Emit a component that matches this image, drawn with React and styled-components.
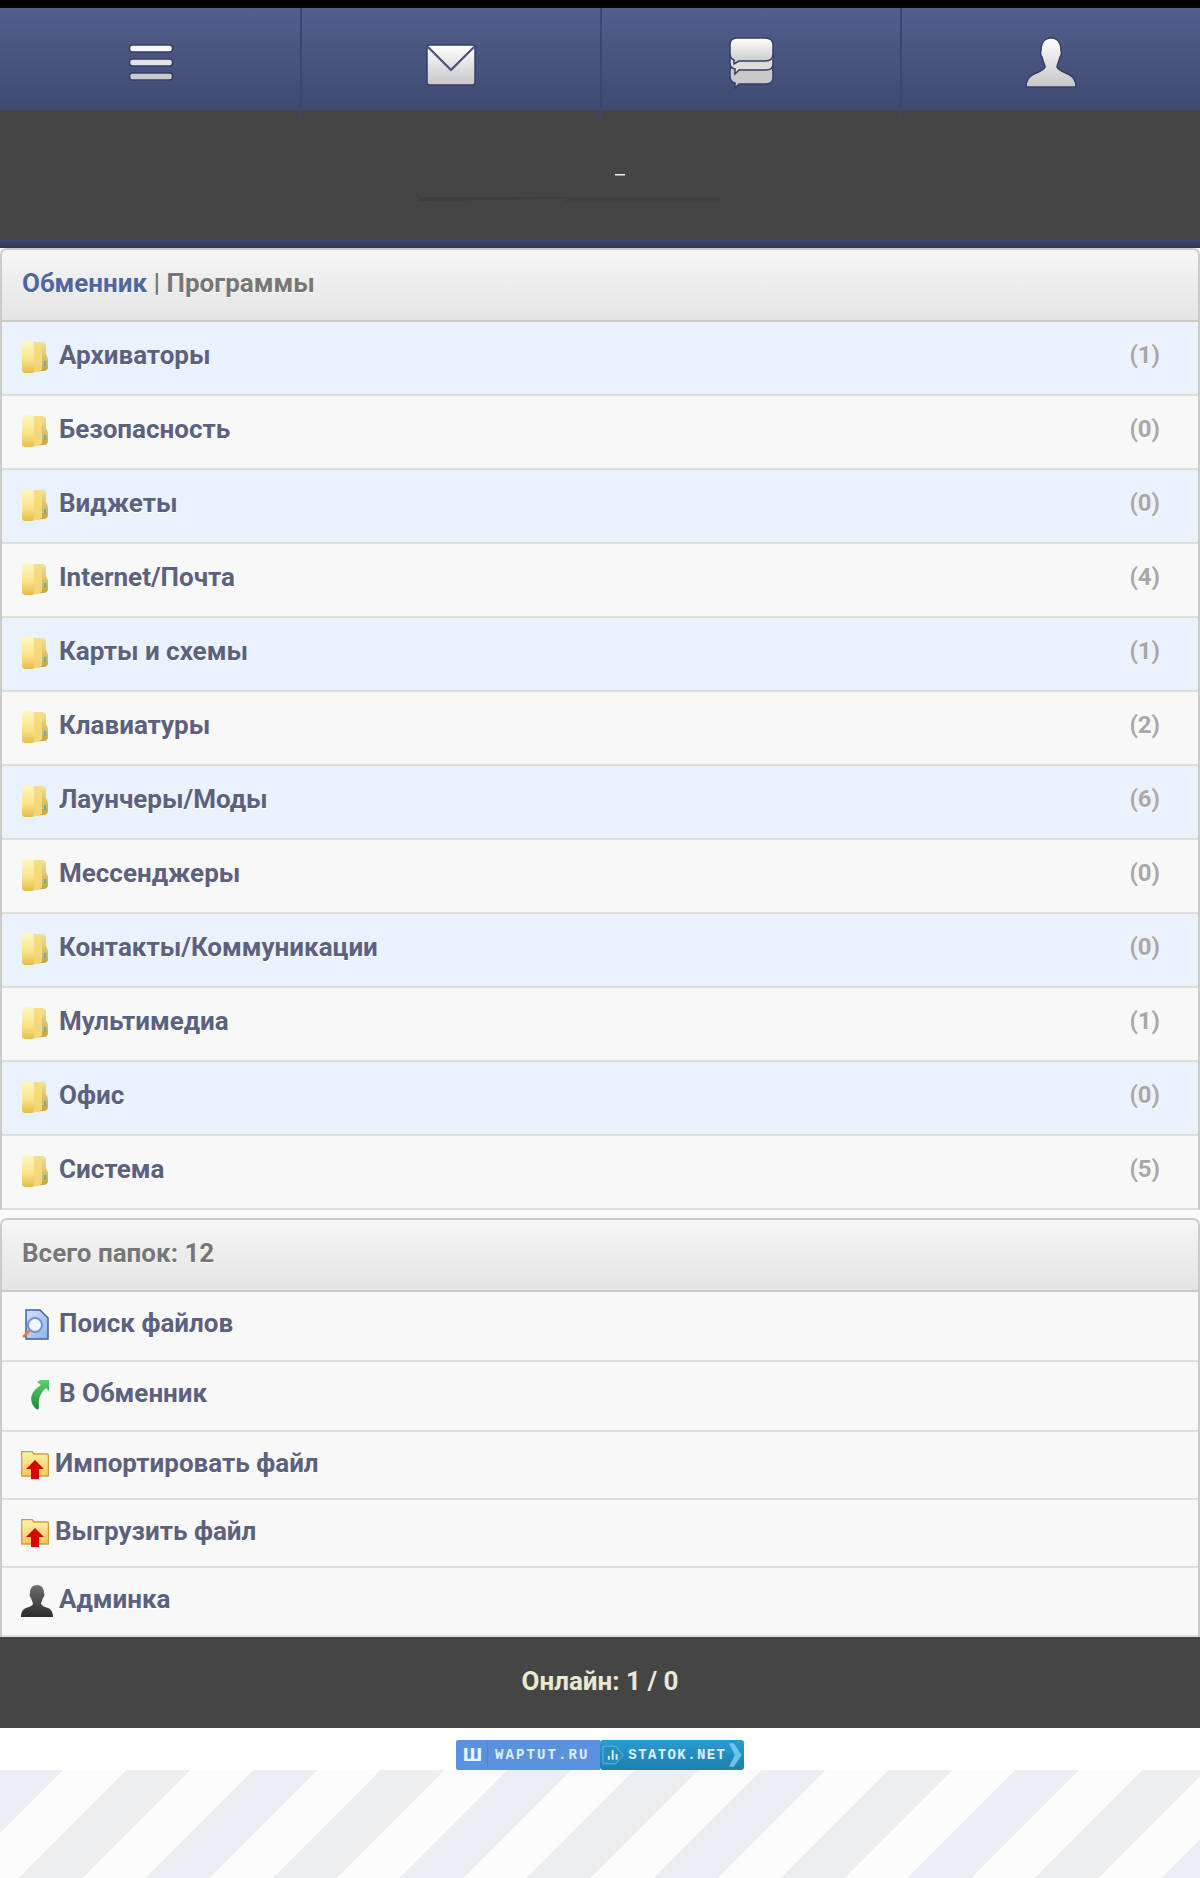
import React from 'react';
import styled, { createGlobalStyle } from 'styled-components';

const FONT = 'Roboto, "Noto Sans", sans-serif';
const BORDER = '#cbcbcb';
const ROW_LINE = '#dedede';
const STRIPE_BLUE = '#ebeef3';
const STRIPE_GREY = '#edeeef';
const STRIPE_WHITE = '#fcfcfc';

const FOLDERS = [
  { name: 'Архиваторы', count: 1 },
  { name: 'Безопасность', count: 0 },
  { name: 'Виджеты', count: 0 },
  { name: 'Internet/Почта', count: 4 },
  { name: 'Карты и схемы', count: 1 },
  { name: 'Клавиатуры', count: 2 },
  { name: 'Лаунчеры/Моды', count: 6 },
  { name: 'Мессенджеры', count: 0 },
  { name: 'Контакты/Коммуникации', count: 0 },
  { name: 'Мультимедиа', count: 1 },
  { name: 'Офис', count: 0 },
  { name: 'Система', count: 5 },
];

const IconDefs = () => (
  <svg width="0" height="0" style={{ position: 'absolute' }}>
    <defs>
      <linearGradient id="navGlyph" x1="0" y1="0" x2="0" y2="1">
        <stop offset="0" stopColor="#ffffff" />
        <stop offset="1" stopColor="#c6c6c6" />
      </linearGradient>
      <linearGradient id="folderFront" x1="0" y1="0" x2="0" y2="1">
        <stop offset="0" stopColor="#fff8c4" />
        <stop offset="0.6" stopColor="#fbe286" />
        <stop offset="1" stopColor="#e6bb4a" />
      </linearGradient>
      <linearGradient id="folderBack" x1="0" y1="0" x2="0" y2="1">
        <stop offset="0" stopColor="#f1e29c" />
        <stop offset="1" stopColor="#c9a23a" />
      </linearGradient>
      <linearGradient id="adminGlyph" x1="0" y1="0" x2="0" y2="1">
        <stop offset="0" stopColor="#6e6e6e" />
        <stop offset="1" stopColor="#2c2c2c" />
      </linearGradient>
      <linearGradient id="arrowGreen" x1="0" y1="0" x2="0" y2="1">
        <stop offset="0" stopColor="#5fd06a" />
        <stop offset="1" stopColor="#17893a" />
      </linearGradient>
      <linearGradient id="pageBlue" x1="0" y1="0" x2="1" y2="1">
        <stop offset="0" stopColor="#d3e3fa" />
        <stop offset="1" stopColor="#8fb2e6" />
      </linearGradient>
      <linearGradient id="folderUp" x1="0" y1="0" x2="0" y2="1">
        <stop offset="0" stopColor="#fff2a8" />
        <stop offset="1" stopColor="#f5c95a" />
      </linearGradient>
    </defs>
  </svg>
);

const MenuGlyph = () => (
  <svg width="47" height="38" viewBox="0 0 47 38">
    <g stroke="#333f68" strokeWidth="1.5">
      <rect x="1.5" y="1" width="43" height="7" rx="3" fill="#fafafa" />
      <rect x="1.5" y="15" width="43" height="7" rx="3" fill="#e2e2e2" />
      <rect x="1.5" y="29" width="43" height="7" rx="3" fill="#cacaca" />
    </g>
  </svg>
);

const MailGlyph = () => (
  <svg width="50" height="46" viewBox="0 -4 50 46">
    <rect x="1" y="1" width="48" height="40" rx="2.5" fill="url(#navGlyph)" stroke="#333f68" strokeWidth="1.5" />
    <path d="M2 3 L25 26 L48 3" fill="none" stroke="#46517a" strokeWidth="2.2" strokeLinejoin="round" />
  </svg>
);

const ChatGlyph = () => (
  <svg width="46" height="52" viewBox="0 0 46 52">
    <g stroke="#333f68" strokeWidth="1.5">
      <path d="M8 28 H38 Q45 28 45 34 V40 Q45 47 38 47 H11 L7 51 V46 Q2 45 2 39 V34 Q2 28 8 28 Z" fill="#c9c9c9" />
      <path d="M8 15 H38 Q45 15 45 21 V27 Q45 33 38 33 H11 L7 37 V32 Q2 31 2 26 V21 Q2 15 8 15 Z" fill="#dddddd" />
      <path d="M9 1 H37 Q45 1 45 8 V17 Q45 24 37 24 H11 L6 27 V23 Q2 22 2 16 V8 Q2 1 9 1 Z" fill="url(#navGlyph)" />
    </g>
  </svg>
);

const PersonGlyph = () => (
  <svg width="52" height="52" viewBox="0 0 52 52">
    <path
      d="M26 1 C33 1 36 7 36 14 C37 16 36 19 35 20 C34 25 32 28 32 30 C33 33 38 35 43 37 C48 39 51 44 51 50 H1 C1 44 4 39 9 37 C14 35 19 33 20 30 C20 28 18 25 17 20 C16 19 15 16 16 14 C16 7 19 1 26 1 Z"
      fill="url(#navGlyph)"
      stroke="#333f68"
      strokeWidth="1.5"
    />
  </svg>
);

const LogoRemnant = () => (
  <svg width="400" height="130" viewBox="0 0 400 130">
    <rect x="215" y="64" width="10" height="1.5" fill="#eeeeee" />
    <path d="M13 81 L20 87 L165 87 L165 89 L20 91 Z" fill="#3f3f3f" />
    <rect x="165" y="87" width="155" height="5" fill="#414141" />
  </svg>
);

const FolderIcon = () => (
  <svg width="28" height="34" viewBox="0 0 28 34">
    <path d="M8 2 H21 Q25 2 25 6 V14 Q27 17 27 20 V27 Q27 31 22 31 L9 32 Z" fill="url(#folderBack)" />
    <path d="M1 5 Q1 1 5 1 H10 Q13 1 13 5 V31 Q13 33 10 33 H5 Q1 33 1 30 Z" fill="url(#folderFront)" />
    <path d="M13 5 L21 2 V30 L13 33 Z" fill="#f8dd7e" opacity="0.85" />
    <rect x="23" y="21" width="2" height="5" fill="#4fb6c8" />
  </svg>
);

const SearchFileIcon = () => (
  <svg width="28" height="32" viewBox="0 0 28 32">
    <path d="M5 1 H19 L27 9 V30 H5 Z" fill="url(#pageBlue)" stroke="#3f5da8" strokeWidth="1.5" />
    <circle cx="14" cy="16" r="7" fill="#eef6ff" stroke="#6f93d6" strokeWidth="2" />
    <path d="M9 21 L2 28" stroke="#d9813a" strokeWidth="2.5" />
  </svg>
);

const BackArrowIcon = () => (
  <svg width="28" height="32" viewBox="0 0 28 32">
    <path d="M19 1 H28 V12 L25 9 C20 13 17 19 18 28 C18 31 16 31 14 29 C7 21 10 12 20 6 L16 3 Z" fill="url(#arrowGreen)" />
  </svg>
);

const UploadFolderIcon = () => (
  <svg width="28" height="28" viewBox="0 0 28 28">
    <path d="M0.5 25 V1.5 Q0.5 0.5 2 0.5 H11 L13 3 H26 Q27.5 3 27.5 5 V25 Z" fill="url(#folderUp)" stroke="#d59a3c" strokeWidth="1.5" />
    <path d="M14 9 L23 18 H18 V28 H10 V18 H5 Z" fill="#d90000" />
  </svg>
);

const AdminIcon = () => (
  <svg width="32" height="32" viewBox="0 0 32 32">
    <path
      d="M16 0 C21 0 23 4 23 8 C24 10 23 12 22 13 C21 16 20 18 20 19 C21 21 24 22 27 23 C30 24 32 27 32 32 H0 C0 27 2 24 5 23 C8 22 11 21 12 19 C12 18 11 16 10 13 C9 12 8 10 9 8 C9 4 11 0 16 0 Z"
      fill="url(#adminGlyph)"
    />
  </svg>
);

const TOOLS = [
  { name: 'Поиск файлов', Icon: SearchFileIcon, height: 68, gap: 10, lift: 1 },
  { name: 'В Обменник', Icon: BackArrowIcon, height: 68, gap: 10, lift: 1 },
  { name: 'Импортировать файл', Icon: UploadFolderIcon, height: 66, gap: 6, lift: 0 },
  { name: 'Выгрузить файл', Icon: UploadFolderIcon, height: 66, gap: 6, lift: 0 },
  { name: 'Админка', Icon: AdminIcon, height: 67, gap: 6, lift: 1 },
];

function App() {
  return (
    <>
      <GlobalStyle />
      <IconDefs />
      <Page>
        <TopEdge />
        <Nav>
          <NavCell><MenuGlyph /></NavCell>
          <NavCell><MailGlyph /></NavCell>
          <NavCell><ChatGlyph /></NavCell>
          <NavCell $last><PersonGlyph /></NavCell>
        </Nav>
        <LogoBand><LogoRemnant /></LogoBand>
        <BlueStrip />
        <Panel>
          <PanelHead>
            <HeadLink>Обменник</HeadLink> | Программы
          </PanelHead>
          {FOLDERS.map((folder, i) => (
            <FolderRow key={folder.name} $tinted={i % 2 === 0}>
              <FolderIcon />
              <RowLabel>{folder.name}</RowLabel>
              <Count>({folder.count})</Count>
            </FolderRow>
          ))}
        </Panel>
        <Panel $spaced>
          <PanelHead>Всего папок: 12</PanelHead>
          {TOOLS.map(({ name, Icon, height, gap, lift }) => (
            <ToolRow key={name} $height={height} $gap={gap} $lift={lift}>
              <Icon />
              <RowLabel>{name}</RowLabel>
            </ToolRow>
          ))}
        </Panel>
        <Footer>Онлайн: 1 / 0</Footer>
        <Counters>
          <WaptutBadge>
            <BadgeMark>ш</BadgeMark>
            <BadgeText $spacing={2.1}>WAPTUT.RU</BadgeText>
          </WaptutBadge>
          <StatokBadge>
            <svg width="24" height="22" viewBox="0 0 24 22">
              <path d="M1 2 H14 L22 11 L14 20 H1 Z" fill="#2a8cbc" stroke="#5cb8e0" />
              <path d="M7 16 V12 M11 16 V6 M15 16 V10" stroke="#d6eefa" strokeWidth="2" />
            </svg>
            <BadgeText $spacing={1.4}>STATOK.NET</BadgeText>
            <svg width="14" height="26" viewBox="0 0 14 26">
              <path d="M0 1 H5 L13 13 L5 25 H0 L6 13 Z" fill="#6fc3e8" />
            </svg>
          </StatokBadge>
        </Counters>
        <Stripes />
      </Page>
    </>
  );
}

const GlobalStyle = createGlobalStyle`
  html, body {
    margin: 0;
    padding: 0;
    background: #ffffff;
  }
  * {
    box-sizing: border-box;
  }
`;

const Page = styled.div`
  display: flex;
  flex-direction: column;
  min-height: 100vh;
  font-family: ${FONT};
  background: #fafafa;
`;

const TopEdge = styled.div`
  height: 8px;
  background: #000000;
`;

const Nav = styled.div`
  display: grid;
  grid-template-columns: repeat(4, 1fr);
  height: 102px;
  background: linear-gradient(to bottom, #525f8a, #3e4a72);
`;

const NavCell = styled.div`
  position: relative;
  display: flex;
  align-items: center;
  justify-content: center;
  padding: 8px 0 0 2px;

  &::after {
    content: '';
    display: ${props => (props.$last ? 'none' : 'block')};
    position: absolute;
    top: 0;
    right: -2px;
    width: 2px;
    height: 110px;
    background: #3b476e;
    z-index: 1;
  }
`;

const LogoBand = styled.div`
  height: 130px;
  background: #454545;
  display: flex;
  justify-content: center;
`;

const BlueStrip = styled.div`
  height: 8px;
  background: linear-gradient(to bottom, #3f4870, #2f3552);
`;

const Panel = styled.div`
  display: flex;
  flex-direction: column;
  margin-top: ${props => (props.$spaced ? '8px' : '0')};
  border: 2px solid ${BORDER};
  border-bottom: 0;
  border-radius: 7px 7px 0 0;
  background: #f8f8f8;
  overflow: hidden;
`;

const PanelHead = styled.div`
  height: 72px;
  display: flex;
  align-items: center;
  padding: 0 20px 4px;
  background: linear-gradient(to bottom, #f6f6f6, #e4e4e4);
  border-bottom: 2px solid ${BORDER};
  font-size: 26px;
  font-weight: 700;
  color: #777777;
  text-shadow: 0 1px 0 #ffffff;
  white-space: pre;
`;

const HeadLink = styled.span`
  color: #4f66a2;
`;

const FolderRow = styled.div`
  height: 74px;
  display: flex;
  align-items: center;
  gap: 10px;
  padding: 0 38px 2px 19px;
  background: ${props => (props.$tinted ? '#eaf2fe' : '#f8f8f8')};
  border-bottom: 2px solid ${ROW_LINE};
`;

const ToolRow = styled.div`
  height: ${props => props.$height + 2}px;
  display: flex;
  align-items: center;
  gap: ${props => props.$gap}px;
  padding: 0 20px ${props => props.$lift * 2}px 19px;
  background: #f8f8f8;
  border-bottom: 2px solid ${ROW_LINE};
`;

const RowLabel = styled.span`
  flex: 1;
  padding-bottom: 4px;
  font-size: 26px;
  font-weight: 700;
  color: #5b617e;
  text-shadow: 0 1px 0 #ffffff;
`;

const Count = styled.span`
  padding-bottom: 4px;
  font-size: 24px;
  font-weight: 700;
  color: #a8a8a8;
  text-shadow: 0 1px 0 #ffffff;
`;

const Footer = styled.div`
  height: 91px;
  display: flex;
  align-items: center;
  justify-content: center;
  padding-bottom: 4px;
  background: #454545;
  font-size: 26px;
  font-weight: 700;
  color: #e9e9d3;
`;

const Counters = styled.div`
  height: 42px;
  padding-top: 12px;
  display: flex;
  justify-content: center;
  background: #ffffff;
`;

const WaptutBadge = styled.div`
  width: 144px;
  height: 30px;
  display: flex;
  align-items: center;
  gap: 7px;
  padding: 0 0 0 2px;
  border-radius: 2px 0 0 2px;
  background: #5b92de;
`;

const StatokBadge = styled.div`
  width: 144px;
  height: 30px;
  display: flex;
  align-items: center;
  gap: 3px;
  padding: 0 1px 0 2px;
  border-radius: 3px;
  background: linear-gradient(to bottom, #2a9bd2, #1c80ae);
`;

const BadgeMark = styled.span`
  width: 30px;
  height: 26px;
  font-family: "Liberation Sans", sans-serif;
  font-size: 24px;
  font-weight: 700;
  line-height: 22px;
  text-align: center;
  color: #eef5ff;
  border-right: 1px solid #4c84d2;
`;

const BadgeText = styled.span`
  font-family: "Liberation Mono", monospace;
  font-size: 14px;
  font-weight: 700;
  letter-spacing: ${props => props.$spacing}px;
  color: #dcecff;
  white-space: nowrap;
`;

const Stripes = styled.div`
  flex: 1;
  background-color: ${STRIPE_WHITE};
  background-image: linear-gradient(
    135deg,
    ${STRIPE_BLUE} 12.5%,
    ${STRIPE_WHITE} 12.5%,
    ${STRIPE_WHITE} 25%,
    ${STRIPE_GREY} 25%,
    ${STRIPE_GREY} 37.5%,
    ${STRIPE_WHITE} 37.5%,
    ${STRIPE_WHITE} 50%,
    ${STRIPE_BLUE} 50%,
    ${STRIPE_BLUE} 62.5%,
    ${STRIPE_WHITE} 62.5%,
    ${STRIPE_WHITE} 75%,
    ${STRIPE_GREY} 75%,
    ${STRIPE_GREY} 87.5%,
    ${STRIPE_WHITE} 87.5%
  );
  background-size: 254px 254px;
`;

export default App;
